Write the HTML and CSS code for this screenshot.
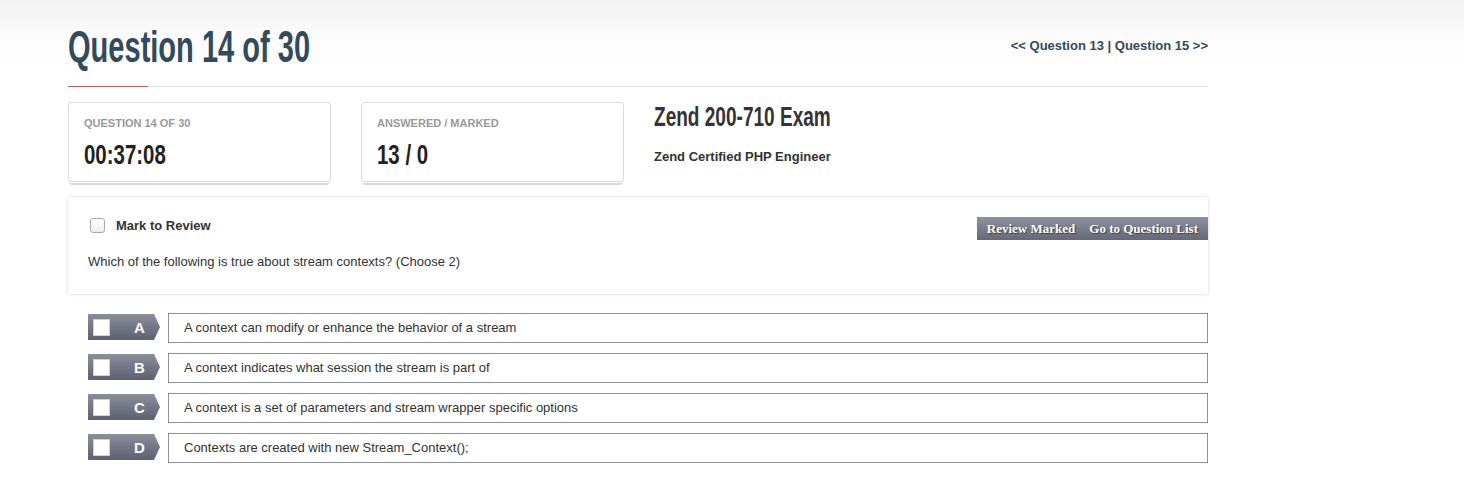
FILE: index.html
```html
<!DOCTYPE html>
<html>
<head>
<meta charset="utf-8">
<link rel="stylesheet" href="styles.css">
</head>
<body>
<div class="page">
  <div class="container">
    <header class="head">
      <h1 class="title"><span class="narrow">Question 14 of 30</span></h1>
      <div class="nav"><a href="#">&lt;&lt; Question 13</a> | <a href="#">Question 15 &gt;&gt;</a></div>
    </header>
    <div class="rule"><span class="rule-accent"></span></div>

    <section class="stats">
      <div class="card">
        <div class="card-label">QUESTION 14 OF 30</div>
        <div class="card-value"><span class="narrow">00:37:08</span></div>
      </div>
      <div class="card">
        <div class="card-label">ANSWERED / MARKED</div>
        <div class="card-value"><span class="narrow">13 / 0</span></div>
      </div>
      <div class="exam">
        <div class="exam-title"><span class="narrow">Zend 200-710 Exam</span></div>
        <div class="exam-sub">Zend Certified PHP Engineer</div>
      </div>
    </section>

    <section class="panel">
      <div class="panel-top">
        <label class="mark"><span class="cb"></span>Mark to Review</label>
        <div class="btns"><a href="#" class="btn">Review Marked</a><a href="#" class="btn">Go to Question List</a></div>
      </div>
      <p class="question">Which of the following is true about stream contexts? (Choose 2)</p>
    </section>

    <ul class="options">
      <li class="opt"><span class="tab"><span class="tcb"></span><span class="letter">A</span></span><span class="otext">A context can modify or enhance the behavior of a stream</span></li>
      <li class="opt"><span class="tab"><span class="tcb"></span><span class="letter">B</span></span><span class="otext">A context indicates what session the stream is part of</span></li>
      <li class="opt"><span class="tab"><span class="tcb"></span><span class="letter">C</span></span><span class="otext">A context is a set of parameters and stream wrapper specific options</span></li>
      <li class="opt"><span class="tab"><span class="tcb"></span><span class="letter">D</span></span><span class="otext">Contexts are created with new Stream_Context();</span></li>
    </ul>
  </div>
</div>
</body>
</html>
```
FILE: styles.css
```css
* { box-sizing: border-box; }
html, body { margin: 0; padding: 0; }
body {
  font-family: "Liberation Sans", Arial, sans-serif;
  font-size: 13px;
  color: #333;
  background: #fff;
}
.page {
  background: linear-gradient(to bottom, #f2f2f2 0px, #fcfcfc 40px, #fff 70px);
  min-height: 487px;
}
.container {
  width: 1140px;
  margin-left: 68px;
  padding-top: 22px;
}
.narrow {
  display: inline-block;
  transform-origin: left center;
  white-space: nowrap;
}
.head {
  display: flex;
  justify-content: space-between;
  align-items: flex-start;
  height: 64px;
}
.title {
  margin: 0;
  font-family: "Liberation Sans", Arial, sans-serif;
  font-weight: bold;
  font-size: 44px;
  line-height: 50px;
  color: #33495c;
}
.title .narrow { transform: scaleX(0.66); }
.nav {
  margin-top: 16px;
  font-weight: bold;
  font-size: 13px;
  color: #34495e;
}
.nav a { color: #34495e; text-decoration: none; }
.rule {
  height: 1px;
  background: #e2e2e2;
  position: relative;
}
.rule-accent {
  position: absolute;
  left: 0; top: 0;
  width: 80px; height: 1px;
  background: #c9585a;
}
.stats {
  display: flex;
  align-items: flex-start;
  margin-top: 15px;
}
.card {
  width: 263px;
  height: 80px;
  border: 1px solid #dcdcdc;
  border-radius: 3px;
  padding: 14px 15px 0;
  margin-right: 30px;
  background: #fff;
  box-shadow: 0 2px 0 -1px #fff, 0 3px 0 -1px #d9d9d9, 0 5px 0 -3px #fff, 0 6px 0 -3px #d9d9d9;
}
.card-label {
  font-size: 11px;
  font-weight: bold;
  color: #999;
  line-height: 13px;
}
.card-value {
  margin-top: 9px;
  font-weight: bold;
  font-size: 28px;
  line-height: 32px;
  color: #222;
}
.card-value .narrow { transform: scaleX(0.73); }
.exam-title {
  font-weight: bold;
  font-size: 28px;
  line-height: 30px;
  color: #333;
}
.exam-title .narrow { transform: scaleX(0.68); }
.exam-sub {
  margin-top: 17px;
  font-weight: bold;
  font-size: 13px;
  color: #333;
}
.panel {
  margin-top: 15px;
  height: 97px;
  background: #fff;
  box-shadow: 0 0 3px rgba(0,0,0,0.18);
  padding: 20px 0 0 20px;
}
.panel-top {
  display: flex;
  justify-content: space-between;
  align-items: flex-start;
}
.mark {
  display: flex;
  align-items: center;
  font-weight: bold;
  font-size: 13px;
  color: #333;
  height: 16px;
}
.cb {
  width: 15px; height: 15px;
  border: 1px solid #aaa;
  border-radius: 3px;
  background: linear-gradient(#fff, #ececec);
  margin: 0 11px 0 2px;
}
.btns {
  display: flex;
  height: 23px;
  background: linear-gradient(to bottom, #8e919e, #666a78);
  padding: 0 10px;
}
.btn {
  font-family: "Liberation Serif", "Times New Roman", serif;
  font-weight: bold;
  font-size: 13px;
  line-height: 24px;
  color: #fff;
  text-decoration: none;
  text-shadow: 1px 1px 1px rgba(0,0,0,0.5);
}
.btn + .btn { margin-left: 14px; }
.question {
  margin: 14px 0 0;
  font-size: 13px;
  color: #333;
}
.options {
  list-style: none;
  margin: 19px 0 0;
  padding: 0 0 0 20px;
}
.opt {
  display: flex;
  align-items: flex-start;
  margin-bottom: 10px;
}
.tab {
  width: 72px;
  height: 26px;
  margin-top: 1px;
  margin-right: 8px;
  display: flex;
  align-items: center;
  background: linear-gradient(to bottom, #8c8f9c, #5c6070);
  clip-path: polygon(0 0, 66px 0, 72px 50%, 66px 100%, 0 100%);
}
.tcb {
  width: 17px; height: 17px;
  background: #fff;
  border: 1px solid #d0d0d0;
  margin-left: 5px;
}
.letter {
  margin-left: 24px;
  font-weight: bold;
  font-size: 15px;
  color: #fff;
}
.otext {
  flex: 1;
  height: 30px;
  border: 1px solid #8d9196;
  padding-left: 15px;
  line-height: 28px;
  font-size: 13px;
  color: #333;
}
```
